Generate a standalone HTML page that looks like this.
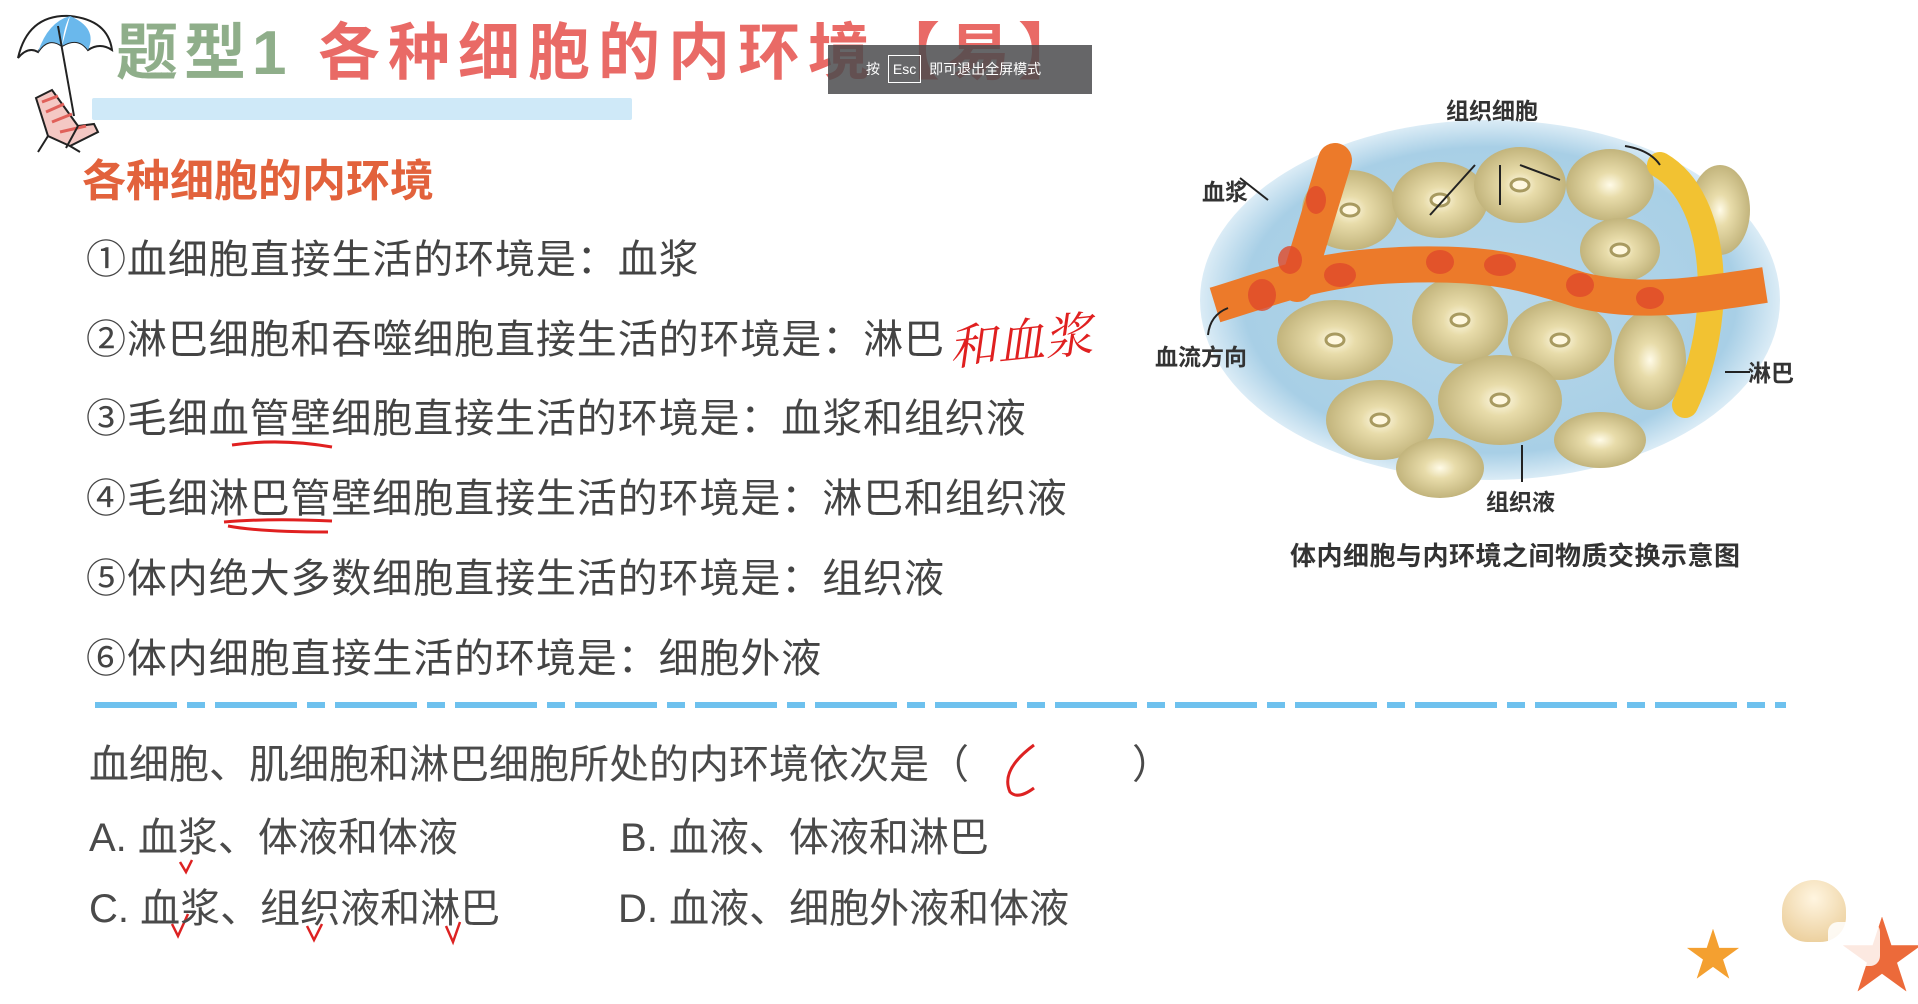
<!DOCTYPE html>
<html><head><meta charset="utf-8"><style>
*{margin:0;padding:0;box-sizing:border-box}
body{width:1918px;height:997px;background:#fff;position:relative;overflow:hidden;font-family:"Liberation Sans","Noto Sans CJK SC",sans-serif;color:#444}
.a{position:absolute;white-space:nowrap}
.row{font-size:40px;line-height:48px;left:86px;color:#444;letter-spacing:0.9px}
.q{font-size:40px;line-height:48px;color:#4a4a4a}
.lbl{font-size:23px;font-weight:bold;color:#333;line-height:26px}
</style></head><body>

<div class="a" style="left:92px;top:98px;width:540px;height:22px;background:#cfe9f8;border-radius:2px"></div>
<div class="a" style="left:116px;top:18px;font-size:62px;line-height:72px;font-weight:bold;color:#8fae8a;letter-spacing:6px">题型1</div>
<div class="a" style="left:318px;top:18px;font-size:62px;line-height:72px;font-weight:bold;color:#e96a66;letter-spacing:8px">各种细胞的内环境【易】</div>
<div class="a" style="left:828px;top:45px;width:264px;height:49px;background:rgba(75,75,78,0.85);color:#fff;font-size:14px;line-height:49px;padding-left:38px">按 <span style="display:inline-block;border:1px solid #fff;padding:0 4px;line-height:26px;margin:0 4px">Esc</span> 即可退出全屏模式</div>

<svg class="a" style="left:8px;top:6px" width="110" height="150" viewBox="0 0 110 150">
<path d="M10 52 Q20 8 62 10 Q100 14 104 44 Q92 36 80 44 Q70 30 54 40 Q40 30 30 46 Q20 40 10 52Z" fill="#fff" stroke="#222" stroke-width="2"/>
<path d="M30 46 Q40 30 54 40 Q56 20 62 10 Q40 16 30 46Z" fill="#6ab8ec"/>
<path d="M54 40 Q70 30 80 44 Q90 22 62 10Z" fill="#6ab8ec"/>
<line x1="50" y1="20" x2="66" y2="110" stroke="#222" stroke-width="2"/>
<path d="M28 92 L44 84 L70 120 L86 118 L90 126 L62 140 L40 130Z" fill="#f4c8c4" stroke="#222" stroke-width="2"/>
<path d="M34 96 L50 90 M38 106 L56 98 M44 116 L64 108 M52 126 L78 120" stroke="#e0605a" stroke-width="3"/>
<path d="M40 130 L30 146 M62 140 L72 146 M70 120 L58 142" stroke="#222" stroke-width="2"/>
</svg>

<div class="a" style="left:82px;top:156px;font-size:44px;line-height:52px;font-weight:bold;color:#e2623c">各种细胞的内环境</div>

<div class="a row" style="top:236px">①血细胞直接生活的环境是：血浆</div>
<div class="a row" style="top:316px">②淋巴细胞和吞噬细胞直接生活的环境是：淋巴</div>
<div class="a row" style="top:395px">③毛细血管壁细胞直接生活的环境是：血浆和组织液</div>
<div class="a row" style="top:475px">④毛细淋巴管壁细胞直接生活的环境是：淋巴和组织液</div>
<div class="a row" style="top:555px">⑤体内绝大多数细胞直接生活的环境是：组织液</div>
<div class="a row" style="top:635px">⑥体内细胞直接生活的环境是：细胞外液</div>

<div class="a" style="left:948px;top:310px;font-size:48px;line-height:56px;color:#e02020;font-style:italic;transform:rotate(-6deg);font-family:'Noto Serif CJK SC',serif">和血浆</div>
<svg class="a" style="left:0;top:0" width="1918" height="997">
<path d="M232 445 Q280 438 332 447" stroke="#e02020" stroke-width="3" fill="none"/>
<path d="M224 522 Q270 518 332 521 M228 526 Q260 532 328 532" stroke="#e02020" stroke-width="3" fill="none"/>
<path d="M1034 745 Q1000 770 1010 792 Q1018 800 1034 788" stroke="#d22" stroke-width="3" fill="none"/>
<path d="M180 862 L186 872 L192 860" stroke="#d22" stroke-width="2.5" fill="none"/>
<path d="M172 924 L178 936 L188 914" stroke="#d22" stroke-width="2.5" fill="none"/>
<path d="M307 926 L314 940 L322 924" stroke="#d22" stroke-width="2.5" fill="none"/>
<path d="M446 926 L453 942 L460 922" stroke="#d22" stroke-width="2.5" fill="none"/>
<line x1="95" y1="705" x2="1786" y2="705" stroke="#6ec1ee" stroke-width="6" stroke-dasharray="82 10 18 10"/>
</svg>

<div class="a q" style="left:89px;top:741px">血细胞、肌细胞和淋巴细胞所处的内环境依次是（</div>
<div class="a q" style="left:1132px;top:741px">）</div>
<div class="a q" style="left:89px;top:814px">A. 血浆、体液和体液</div>
<div class="a q" style="left:620px;top:814px">B. 血液、体液和淋巴</div>
<div class="a q" style="left:89px;top:885px">C. 血浆、组织液和淋巴</div>
<div class="a q" style="left:618px;top:885px">D. 血液、细胞外液和体液</div>

<svg class="a" style="left:1180px;top:110px" width="620" height="400" viewBox="1180 110 620 400">
<defs>
<radialGradient id="bl" cx="50%" cy="50%" r="50%"><stop offset="0" stop-color="#b8d8ea"/><stop offset="0.85" stop-color="#a8cfe6"/><stop offset="1" stop-color="#dbecf6"/></radialGradient>
<radialGradient id="cl"><stop offset="0" stop-color="#fffbe8"/><stop offset="0.35" stop-color="#e8dcaa"/><stop offset="1" stop-color="#c2b47c"/></radialGradient>
</defs>
<ellipse cx="1490" cy="300" rx="290" ry="180" fill="url(#bl)"/>
<g fill="url(#cl)">
<ellipse cx="1350" cy="210" rx="48" ry="40"/><ellipse cx="1440" cy="200" rx="48" ry="38"/><ellipse cx="1520" cy="185" rx="46" ry="38"/><ellipse cx="1610" cy="185" rx="44" ry="36"/>
<ellipse cx="1620" cy="250" rx="40" ry="32"/><ellipse cx="1720" cy="210" rx="30" ry="45"/>
<ellipse cx="1335" cy="340" rx="58" ry="40"/><ellipse cx="1460" cy="320" rx="48" ry="44"/><ellipse cx="1560" cy="340" rx="52" ry="40"/><ellipse cx="1650" cy="360" rx="36" ry="50"/>
<ellipse cx="1380" cy="420" rx="54" ry="40"/><ellipse cx="1500" cy="400" rx="62" ry="45"/><ellipse cx="1440" cy="468" rx="44" ry="30"/><ellipse cx="1600" cy="440" rx="46" ry="28"/>
</g>
<g fill="#fff8e0" stroke="#a89a60" stroke-width="3"><ellipse cx="1350" cy="210" rx="9" ry="6"/><ellipse cx="1440" cy="200" rx="9" ry="6"/><ellipse cx="1520" cy="185" rx="9" ry="6"/><ellipse cx="1335" cy="340" rx="9" ry="6"/><ellipse cx="1460" cy="320" rx="9" ry="6"/><ellipse cx="1560" cy="340" rx="9" ry="6"/><ellipse cx="1500" cy="400" rx="9" ry="6"/><ellipse cx="1380" cy="420" rx="9" ry="6"/><ellipse cx="1620" cy="250" rx="9" ry="6"/></g>
<path d="M1660 165 C1720 200 1725 320 1685 405" stroke="#f2c232" stroke-width="26" fill="none" stroke-linecap="round"/>
<path d="M1297 285 L1335 160" stroke="#ec7a2a" stroke-width="34" fill="none" stroke-linecap="round"/>
<path d="M1215 305 C1280 285 1320 268 1400 265 C1480 262 1520 270 1580 290 C1640 305 1700 295 1765 285" stroke="#ec7a2a" stroke-width="36" fill="none"/>
<g fill="#e04a2a" opacity="0.8"><ellipse cx="1262" cy="295" rx="14" ry="16"/><ellipse cx="1290" cy="260" rx="12" ry="14"/><ellipse cx="1316" cy="200" rx="10" ry="14"/><ellipse cx="1340" cy="275" rx="16" ry="12"/><ellipse cx="1440" cy="262" rx="14" ry="12"/><ellipse cx="1500" cy="265" rx="16" ry="11"/><ellipse cx="1580" cy="285" rx="14" ry="12"/><ellipse cx="1650" cy="298" rx="14" ry="11"/></g>
<g stroke="#222" stroke-width="2" fill="none"><line x1="1430" y1="215" x2="1475" y2="165"/><line x1="1500" y1="205" x2="1500" y2="165"/><line x1="1560" y1="180" x2="1520" y2="165"/><line x1="1268" y1="200" x2="1240" y2="178"/><path d="M1208 335 Q1210 315 1228 308"/><line x1="1522" y1="445" x2="1522" y2="482"/><line x1="1725" y1="372" x2="1750" y2="372"/><path d="M1625 146 Q1650 150 1660 165"/></g>
</svg>
<div class="a lbl" style="left:1446px;top:98px">组织细胞</div>
<div class="a lbl" style="left:1202px;top:179px">血浆</div>
<div class="a lbl" style="left:1155px;top:344px">血流方向</div>
<div class="a lbl" style="left:1748px;top:360px">淋巴</div>
<div class="a lbl" style="left:1486px;top:489px">组织液</div>
<div class="a" style="left:1290px;top:541px;font-size:26px;line-height:30px;color:#333;font-weight:bold;letter-spacing:0.5px">体内细胞与内环境之间物质交换示意图</div>

<div class="a" style="left:1685px;top:928px;font-size:56px;line-height:56px;color:#f4a030">★</div>
<div class="a" style="left:1782px;top:880px;width:64px;height:62px;border-radius:50% 50% 40% 40%;background:radial-gradient(circle at 50% 30%,#fff5e0,#e8c890)"></div>
<div class="a" style="left:1840px;top:915px;font-size:84px;line-height:84px;color:#ec6a3a">★</div>
<div class="a" style="left:1828px;top:922px;width:52px;height:44px;border-radius:10px;background:rgba(255,255,255,0.85)"></div>
</body></html>
